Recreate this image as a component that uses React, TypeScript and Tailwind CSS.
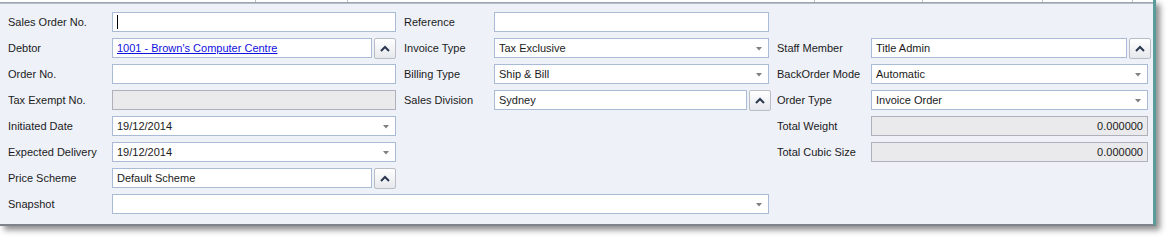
import React from 'react';

const font = { fontFamily: '"Liberation Sans", Arial, sans-serif' };

function Label({ text, cls }: { text: string; cls: string }) {
  return <div className={`flex items-center text-[11px] text-[#1b1b1b] ${cls}`}>{text}</div>;
}

function Box({ children, cls = '', disabled = false }: { children?: React.ReactNode; cls?: string; disabled?: boolean }) {
  return (
    <div
      className={`relative flex h-[20px] items-center border px-[4px] text-[11px] text-[#1b1b1b] ${
        disabled ? 'border-[#aeb1ba] bg-[#eaeaec]' : 'border-[#a9bbd6] bg-white'
      } ${cls}`}
    >
      {children}
    </div>
  );
}

function Arrow() {
  return (
    <svg className="absolute right-[6px] top-[8px]" width="6" height="4" viewBox="0 0 6 4" aria-hidden="true">
      <polygon points="0,0 6,0 3,3.5" fill="#7f7f84" />
    </svg>
  );
}

function Combo({ value, cls }: { value: string; cls: string }) {
  return (
    <Box cls={cls}>
      <span>{value}</span>
      <Arrow />
    </Box>
  );
}

function LookupButton() {
  return (
    <button className="grid h-[21px] w-[22px] shrink-0 place-items-center rounded-[2px] border border-[#b9bdc6] bg-gradient-to-b from-white to-[#e6e8ec]">
      <svg width="10" height="7" viewBox="0 0 10 7" aria-hidden="true">
        <polyline points="1,6 5,2 9,6" fill="none" stroke="#2b3750" strokeWidth="2" />
      </svg>
    </button>
  );
}

function Lookup({ children, cls }: { children: React.ReactNode; cls: string }) {
  return (
    <div className={`flex gap-[2px] ${cls}`}>
      <Box cls="flex-1">{children}</Box>
      <LookupButton />
    </div>
  );
}

export default function App() {
  return (
    <div className="h-[240px] w-[1173px] bg-white" style={font}>
      <div className="h-[226px] w-[1156px] border-r-[3px] border-b-2 border-r-[#5a9c9c] border-b-[#7d838c] bg-[#eef1f8] shadow-[4px_4px_6px_rgba(0,0,0,0.45)]">
        <div className="flex h-[2px] bg-white">
          <div className="w-[256px] border-r border-[#b8bec8]" />
          <div className="w-[92px] border-r border-[#b8bec8]" />
          <div className="w-[467px] border-r border-[#b8bec8]" />
          <div className="w-[108px] border-r border-[#b8bec8]" />
          <div className="w-[120px] border-r border-[#b8bec8]" />
          <div className="w-[90px] border-r border-[#b8bec8]" />
        </div>
        <div className="h-[2px] bg-gradient-to-b from-[#8f98a4] to-[#c4cad3]" />
        <div className="grid auto-rows-[20px] grid-cols-[104px_284px_8px_90px_275px_8px_94px_277px] gap-y-[6px] pl-[8px] pt-[8px]">
          <Label text="Sales Order No." cls="col-start-1 row-start-1" />
          <Box cls="col-start-2 row-start-1">
            <span className="h-[14px] w-px bg-black" />
          </Box>
          <Label text="Reference" cls="col-start-4 row-start-1" />
          <Box cls="col-start-5 row-start-1" />

          <Label text="Debtor" cls="col-start-1 row-start-2" />
          <Lookup cls="col-start-2 row-start-2">
            <span className="text-[#1111dd] underline">1001 - Brown's Computer Centre</span>
          </Lookup>
          <Label text="Invoice Type" cls="col-start-4 row-start-2" />
          <Combo value="Tax Exclusive" cls="col-start-5 row-start-2" />
          <Label text="Staff Member" cls="col-start-7 row-start-2" />
          <Lookup cls="col-start-8 row-start-2 -mr-[3px]">
            <span>Title Admin</span>
          </Lookup>

          <Label text="Order No." cls="col-start-1 row-start-3" />
          <Box cls="col-start-2 row-start-3" />
          <Label text="Billing Type" cls="col-start-4 row-start-3" />
          <Combo value="Ship & Bill" cls="col-start-5 row-start-3" />
          <Label text="BackOrder Mode" cls="col-start-7 row-start-3" />
          <Combo value="Automatic" cls="col-start-8 row-start-3" />

          <Label text="Tax Exempt No." cls="col-start-1 row-start-4" />
          <Box disabled cls="col-start-2 row-start-4" />
          <Label text="Sales Division" cls="col-start-4 row-start-4" />
          <Lookup cls="col-start-5 row-start-4 -mr-[2px]">
            <span>Sydney</span>
          </Lookup>
          <Label text="Order Type" cls="col-start-7 row-start-4" />
          <Combo value="Invoice Order" cls="col-start-8 row-start-4" />

          <Label text="Initiated Date" cls="col-start-1 row-start-5" />
          <Combo value="19/12/2014" cls="col-start-2 row-start-5" />
          <Label text="Total Weight" cls="col-start-7 row-start-5" />
          <Box disabled cls="col-start-8 row-start-5 justify-end">
            <span>0.000000</span>
          </Box>

          <Label text="Expected Delivery" cls="col-start-1 row-start-6" />
          <Combo value="19/12/2014" cls="col-start-2 row-start-6" />
          <Label text="Total Cubic Size" cls="col-start-7 row-start-6" />
          <Box disabled cls="col-start-8 row-start-6 justify-end">
            <span>0.000000</span>
          </Box>

          <Label text="Price Scheme" cls="col-start-1 row-start-7" />
          <Lookup cls="col-start-2 row-start-7">
            <span>Default Scheme</span>
          </Lookup>

          <Label text="Snapshot" cls="col-start-1 row-start-8" />
          <Combo value="" cls="col-start-2 col-span-4 row-start-8" />
        </div>
      </div>
    </div>
  );
}
